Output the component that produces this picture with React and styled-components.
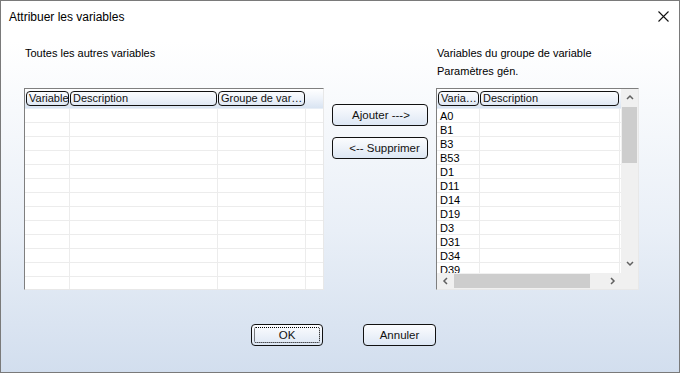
import React from "react";
import styled, { createGlobalStyle } from "styled-components";

const Global = createGlobalStyle`
  html, body { margin: 0; padding: 0; width: 680px; height: 373px; overflow: hidden; background: #fff; }
  * { box-sizing: border-box; }
`;

const Window = styled.div`
  width: 680px;
  height: 373px;
  border: 1px solid #7a7a7a;
  display: flex;
  flex-direction: column;
  font-family: "Liberation Sans", Arial, sans-serif;
  color: #000;
  background: linear-gradient(to bottom, #ffffff 0px, #ffffff 40px, #e9eff7 230px, #d2deee 372px);
`;

const TitleBar = styled.div`
  height: 31px;
  flex: 0 0 31px;
  display: flex;
  align-items: center;
  justify-content: space-between;
  padding: 0 10px 0 8px;
  font-size: 12px;
`;

const Body = styled.div`
  flex: 1;
  display: flex;
  flex-direction: column;
  padding: 12px 0 0 23px;
`;

const Columns = styled.div`
  display: flex;
  align-items: flex-start;
`;

const Column = styled.div`
  display: flex;
  flex-direction: column;
  width: ${(p) => p.$w}px;
  margin-right: ${(p) => p.$mr || 0}px;
`;

const Label = styled.div`
  height: 44px;
  font-size: 11px;
  line-height: 18px;
  padding-left: 1px;
`;

const Middle = styled.div`
  display: flex;
  flex-direction: column;
  gap: 11px;
  padding-top: 60px;
  width: 96px;
  margin-right: 8px;
`;

const Button = styled.button`
  width: ${(p) => p.$w || 96}px;
  height: 22px;
  border: 1px solid #111;
  border-radius: 4px;
  background: linear-gradient(to bottom, #fbfcfe 0%, #edf2f9 50%, #dde7f4 100%);
  font-family: "Liberation Sans", Arial, sans-serif;
  font-size: 11.5px;
  color: #111;
  padding: 0 0 0 ${(p) => p.$shift || 0}px;
  position: relative;
  display: flex;
  align-items: center;
  justify-content: center;
  &::after {
    content: "";
    display: ${(p) => (p.$focus ? "block" : "none")};
    position: absolute;
    inset: 2px;
    border: 1px dotted #000;
    border-radius: 2px;
  }
`;

const GridBox = styled.div`
  position: relative;
  height: 202px;
  border-style: solid;
  border-width: 1px;
  border-color: #7f7f7f #e8e8e8 #e8e8e8 #7f7f7f;
  background: #fff;
  display: flex;
  overflow: hidden;
`;

const GridMain = styled.div`
  flex: 1;
  display: flex;
  flex-direction: column;
  min-width: 0;
`;

const GridArea = styled.div`
  display: flex;
  flex: 1;
  min-height: 0;
`;

const GridInner = styled.div`
  flex: 1;
  min-width: 0;
  overflow: hidden;
  display: flex;
  flex-direction: column;
`;

const HeaderRow = styled.div`
  height: 20px;
  flex: 0 0 20px;
  display: grid;
  grid-template-columns: ${(p) => p.$cols};
  align-items: start;
  background: linear-gradient(to bottom, #ffffff 0%, #eef3fa 50%, #d9e4f2 100%);
  border-bottom: 1px solid #e8eef6;
`;

const HeaderCell = styled.div`
  margin: 2px 1px 0 0;
  height: 15px;
  border: 1px solid #111;
  border-radius: 4px;
  font-size: 11px;
  line-height: 13px;
  padding: 0 2px;
  white-space: nowrap;
  overflow: hidden;
  color: #111;
  &:first-child { margin-left: 1px; }
`;

const HeaderFill = styled.div``;

const Row = styled.div`
  height: 14px;
  flex: 0 0 14px;
  display: grid;
  grid-template-columns: ${(p) => p.$cols};
  border-bottom: 1px solid #ececec;
`;

const Cell = styled.div`
  border-right: 1px solid #ececec;
  font-size: 11px;
  line-height: 14px;
  padding-left: 3px;
  white-space: nowrap;
  overflow: hidden;
`;

const VScroll = styled.div`
  width: 17px;
  flex: 0 0 17px;
  background: #f0f0f0;
  display: flex;
  flex-direction: column;
  align-items: center;
`;

const HScroll = styled.div`
  height: 16px;
  flex: 0 0 16px;
  background: #f0f0f0;
  display: flex;
  align-items: center;
`;

const Corner = styled.div`
  width: 17px;
  flex: 0 0 17px;
  background: #f0f0f0;
`;

const ArrowBox = styled.div`
  width: 17px;
  height: ${(p) => (p.$h ? 16 : 18)}px;
  flex: 0 0 auto;
  display: flex;
  align-items: center;
  justify-content: center;
`;

const VThumb = styled.div`
  width: 15px;
  height: 56px;
  background: #cdcdcd;
`;

const HThumb = styled.div`
  height: 14px;
  width: 136px;
  background: #cdcdcd;
`;

const Spacer = styled.div`
  flex: 1;
`;

const Footer = styled.div`
  display: flex;
  gap: 40px;
  padding-left: 227px;
  margin-top: 34px;
`;

const Chevron = ({ dir }) => {
  const paths = {
    up: "M1 5 L4 2 L7 5",
    down: "M1 2 L4 5 L7 2",
    left: "M5 1 L2 4 L5 7",
    right: "M2 1 L5 4 L2 7",
  };
  return (
    <svg width="8" height="8" viewBox="0 0 8 8">
      <path d={paths[dir]} fill="none" stroke="#606060" strokeWidth="1.5" />
    </svg>
  );
};

const CloseIcon = () => (
  <svg width="11" height="11" viewBox="0 0 11 11">
    <path d="M0.5 0.5 L10.5 10.5 M10.5 0.5 L0.5 10.5" stroke="#111" strokeWidth="1.1" />
  </svg>
);

function DataGrid({ cols, headers, rows, rowCount, scroll }) {
  const template = cols.map((c) => `${c}px`).join(" ") + " 1fr";
  const list = Array.from({ length: rowCount }, (_, i) => rows[i] || []);
  const content = (
    <GridInner>
      <HeaderRow $cols={template}>
        {headers.map((h) => (
          <HeaderCell key={h}>{h}</HeaderCell>
        ))}
        <HeaderFill />
      </HeaderRow>
      {list.map((r, i) => (
        <Row key={i} $cols={template}>
          {cols.map((_, j) => (
            <Cell key={j}>{r[j] || ""}</Cell>
          ))}
          <div />
        </Row>
      ))}
    </GridInner>
  );
  if (!scroll) return <GridBox>{content}</GridBox>;
  return (
    <GridBox>
      <GridMain>
        <GridArea>
          {content}
          <VScroll>
            <ArrowBox>
              <Chevron dir="up" />
            </ArrowBox>
            <VThumb />
            <Spacer />
            <ArrowBox>
              <Chevron dir="down" />
            </ArrowBox>
          </VScroll>
        </GridArea>
        <HScroll>
          <ArrowBox $h>
            <Chevron dir="left" />
          </ArrowBox>
          <HThumb />
          <Spacer />
          <ArrowBox $h>
            <Chevron dir="right" />
          </ArrowBox>
          <Corner />
        </HScroll>
      </GridMain>
    </GridBox>
  );
}

const rightRows = ["A0", "B1", "B3", "B53", "D1", "D11", "D14", "D19", "D3", "D31", "D34", "D39"].map((v) => [v, ""]);

export default function App() {
  return (
    <>
      <Global />
      <Window>
        <TitleBar>
          <span>Attribuer les variables</span>
          <CloseIcon />
        </TitleBar>
        <Body>
          <Columns>
            <Column $w={300} $mr={8}>
              <Label>Toutes les autres variables</Label>
              <DataGrid
                cols={[45, 148, 88]}
                headers={["Variable", "Description", "Groupe de var…"]}
                rows={[]}
                rowCount={13}
              />
            </Column>
            <Middle>
              <Button $shift={2}>Ajouter ---&gt;</Button>
              <Button $shift={9}>&lt;-- Supprimer</Button>
            </Middle>
            <Column $w={203}>
              <Label>
                Variables du groupe de variable
                <br />
                Paramètres gén.
              </Label>
              <DataGrid
                cols={[43, 140]}
                headers={["Varia…", "Description"]}
                rows={rightRows}
                rowCount={12}
                scroll
              />
            </Column>
          </Columns>
          <Footer>
            <Button $w={72} $focus>
              OK
            </Button>
            <Button $w={73}>Annuler</Button>
          </Footer>
        </Body>
      </Window>
    </>
  );
}
